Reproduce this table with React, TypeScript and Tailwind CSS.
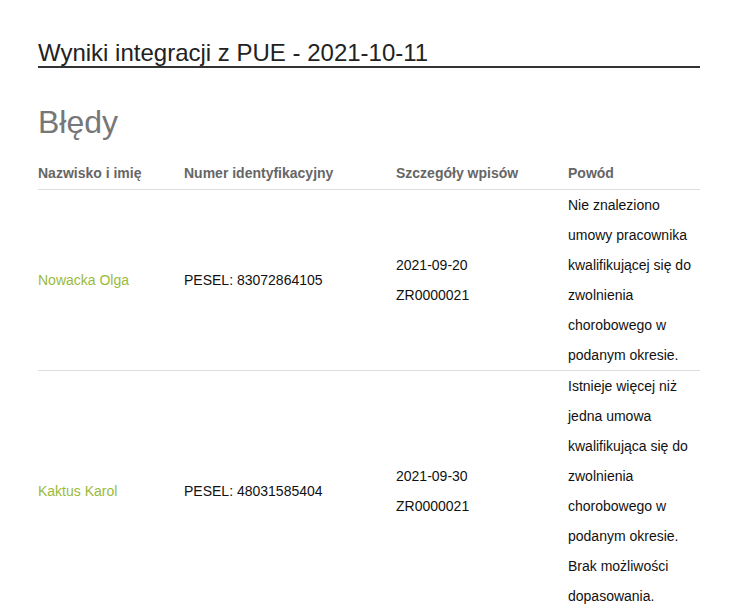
const rows = [
  {
    name: 'Nowacka Olga',
    id: 'PESEL: 83072864105',
    date: '2021-09-20',
    ref: 'ZR0000021',
    reason: 'Nie znaleziono umowy pracownika kwalifikującej się do zwolnienia chorobowego w podanym okresie.',
  },
  {
    name: 'Kaktus Karol',
    id: 'PESEL: 48031585404',
    date: '2021-09-30',
    ref: 'ZR0000021',
    reason:
      'Istnieje więcej niż jedna umowa kwalifikująca się do zwolnienia chorobowego w podanym okresie. Brak możliwości dopasowania.',
  },
];

export default function App() {
  return (
    <div className="min-h-[610px] bg-white pl-[38px] pr-[33px] pt-[40px] font-['Liberation_Sans',Arial,sans-serif] text-[14px] text-[#222]">
      <h1 className="border-b-2 border-[#333] text-[24px] leading-[26px] font-normal text-[#222]">
        Wyniki integracji z PUE - 2021-10-11
      </h1>

      <h2 className="mt-[34px] text-[32px] leading-[40px] font-normal text-[#777]">Błędy</h2>

      <table className="mt-[20px] w-full table-fixed border-collapse">
        <colgroup>
          <col className="w-[146px]" />
          <col className="w-[212px]" />
          <col className="w-[172px]" />
          <col />
        </colgroup>
        <thead>
          <tr className="border-b border-[#ddd] text-left text-[14px] font-bold text-[#666]">
            <th className="pb-[5px] font-bold leading-[22px]">Nazwisko i imię</th>
            <th className="pb-[5px] font-bold leading-[22px]">Numer identyfikacyjny</th>
            <th className="pb-[5px] font-bold leading-[22px]">Szczegóły wpisów</th>
            <th className="pb-[5px] font-bold leading-[22px]">Powód</th>
          </tr>
        </thead>
        <tbody>
          {rows.map((r) => (
            <tr key={r.name} className="border-b border-[#ddd] align-middle leading-[30px]">
              <td className="text-[#9bba3c]">{r.name}</td>
              <td className="text-[#111]">{r.id}</td>
              <td className="text-[#111]">
                <div>{r.date}</div>
                <div>{r.ref}</div>
              </td>
              <td className="text-[#111]">{r.reason}</td>
            </tr>
          ))}
        </tbody>
      </table>
    </div>
  );
}
